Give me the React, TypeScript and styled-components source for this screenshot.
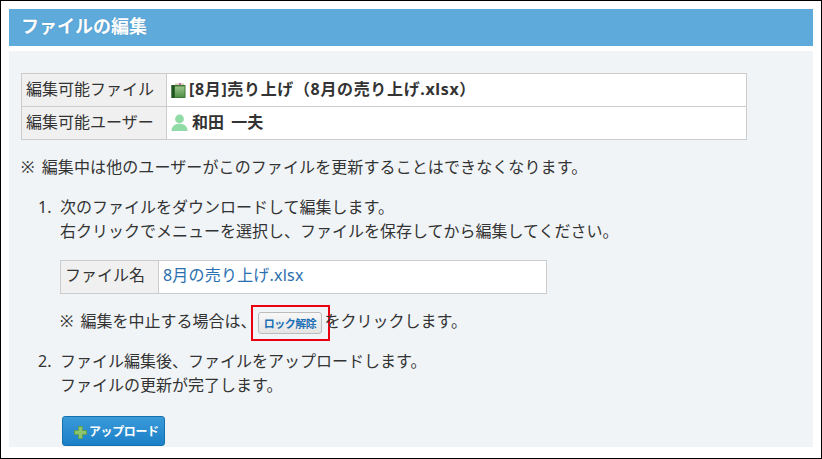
import React from "react";
import styled, { createGlobalStyle } from "styled-components";

const Global = createGlobalStyle`
  html, body { margin: 0; padding: 0; background: #fff; }
  body { font-family: "Noto Sans", "Noto Sans CJK JP", sans-serif; color: #333; }
`;
const Frame = styled.div`
  width: 822px; height: 459px; box-sizing: border-box; border: 1px solid #000;
  padding: 8px 8px 0; overflow: hidden; background: #fff;
`;
const Header = styled.h1`
  margin: 0; height: 37px; background: #5daadb; color: #fff; font-size: 18px; font-weight: 700;
  line-height: 34px; padding-left: 12px; text-shadow: 0 0 1px rgba(60,110,150,.5);
`;
const Panel = styled.div`
  margin-top: 5px; height: 396px; background: #f0f4f7; padding: 22px 12px 0; box-sizing: border-box;
  font-size: 16px; word-spacing: 3px;
`;
const Table = styled.table`
  border-collapse: collapse; background: #fff; table-layout: fixed; width: ${p => p.$w}px;
  th, td { border: 1px solid #ccc; padding: 0 0 ${p => p.$pb}px; height: ${p => p.$h - p.$pb}px; font-size: 16px; line-height: 24px; }
  th { background: #f0f0f0; font-weight: 400; text-align: left; padding-left: 4px; width: ${p => p.$th}px; box-sizing: border-box; }
  td { padding-left: 4px; }
`;
const Bold = styled.td`
  font-weight: 700; letter-spacing: ${p => p.$track}px;
  svg { vertical-align: -3px; margin-right: ${p => p.$gap}px; }
`;
const Line = styled.p`
  margin: ${p => p.$top}px 0 0 ${p => p.$left || 0}px; line-height: 24px; white-space: nowrap; letter-spacing: .1px;
`;
const Steps = styled.div`
  margin: 16px 0 0 17px;
`;
const Step = styled.div`
  display: flex; gap: 8px; margin-top: ${p => p.$top || 0}px; line-height: 24px; white-space: nowrap;
`;
const Num = styled.span`
  width: 14px;
`;
const LinkCell = styled.td`
  color: #2a6fb0; padding-left: 4px; letter-spacing: .2px;
`;
const Indent = styled.div`
  margin: 17px 0 0 22px;
`;
const Note = styled.div`
  display: flex; align-items: flex-start; margin: 11px 0 0 22px; height: 36px; line-height: 32px; white-space: nowrap;
`;
const Highlight = styled.span`
  display: inline-flex; align-items: center; justify-content: center; box-sizing: border-box;
  width: 79px; height: 36px; border: 2px solid #ea0010; margin: 0 -5px 0 -6px;
`;
const LockButton = styled.span`
  display: inline-flex; align-items: center; justify-content: center; width: 64px; height: 22px; box-sizing: border-box;
  border: 1px solid #bbb; border-radius: 3px; background: linear-gradient(#f8f8f8, #e4e4e4);
  color: #1a6fb5; font-size: 11px; line-height: 1; font-weight: 700; letter-spacing: -.5px;
`;
const UploadButton = styled.span`
  display: inline-flex; align-items: center; box-sizing: border-box; margin: 19px 0 0 41px;
  width: 103px; height: 30px; padding-left: 11px; border: 1px solid #1570ae; border-radius: 3px;
  background: linear-gradient(#3a9ad9, #1b80c8); color: #fff; font-size: 12px; font-weight: 700; letter-spacing: -.4px;
  svg { margin-right: 2px; margin-top: 3px; }
`;

const FileIcon = () => (
  <svg width="15" height="15" viewBox="0 0 15 15">
    <defs>
      <linearGradient id="bookFace" x1="0" y1="0" x2="0" y2="1">
        <stop offset="0" stopColor="#9cc48c" />
        <stop offset="1" stopColor="#4f8f45" />
      </linearGradient>
    </defs>
    <rect x="4" y="0.500" width="9" height="2" fill="#d9c9b0" />
    <rect x="8" y="0" width="2" height="2" fill="#c46ab0" />
    <rect x="0.500" y="2" width="14" height="13" fill="#3f7a37" />
    <rect x="0.500" y="2" width="3" height="13" fill="#1f5320" />
    <rect x="4" y="3.500" width="9.500" height="10.500" fill="url(#bookFace)" />
  </svg>
);
const UserIcon = () => (
  <svg width="17" height="17" viewBox="0 0 17 17">
    <circle cx="8.500" cy="5" r="4.400" fill="#90dba6" />
    <path d="M0.500 17c0-4.500 3-6.500 5.500-7h5c2.500.5 5.500 2.500 5.500 7z" fill="#90dba6" />
  </svg>
);
const PlusIcon = () => (
  <svg width="13" height="13" viewBox="0 0 13 13">
    <path d="M4.500 0.500h4v4h4v4h-4v4h-4v-4h-4v-4h4z" fill="#8cc56b" stroke="#5f9c49" strokeWidth="0.800" />
  </svg>
);

export default function App() {
  return (
    <Frame>
      <Global />
      <Header>ファイルの編集</Header>
      <Panel>
        <Table $w={726} $h={32} $th={145} $pb={2}>
          <tbody>
            <tr><th>編集可能ファイル</th><Bold $track={0.65} $gap={3}><FileIcon />[8月]売り上げ（8月の売り上げ.xlsx）</Bold></tr>
            <tr><th>編集可能ユーザー</th><Bold $track={0} $gap={4}><UserIcon />和田 一夫</Bold></tr>
          </tbody>
        </Table>
        <Line $top={15}>※ 編集中は他のユーザーがこのファイルを更新することはできなくなります。</Line>
        <Steps>
          <Step><Num>1.</Num><div>次のファイルをダウンロードして編集します。<br />右クリックでメニューを選択し、ファイルを保存してから編集してください。</div></Step>
          <Indent>
            <Table $w={487} $h={32} $th={98} $pb={4}>
              <tbody><tr><th>ファイル名</th><LinkCell>8月の売り上げ.xlsx</LinkCell></tr></tbody>
            </Table>
          </Indent>
          <Note>※ 編集を中止する場合は、<Highlight><LockButton>ロック解除</LockButton></Highlight>をクリックします。</Note>
          <Step $top={8}><Num>2.</Num><div>ファイル編集後、ファイルをアップロードします。<br />ファイルの更新が完了します。</div></Step>
        </Steps>
        <UploadButton><PlusIcon />アップロード</UploadButton>
      </Panel>
    </Frame>
  );
}
